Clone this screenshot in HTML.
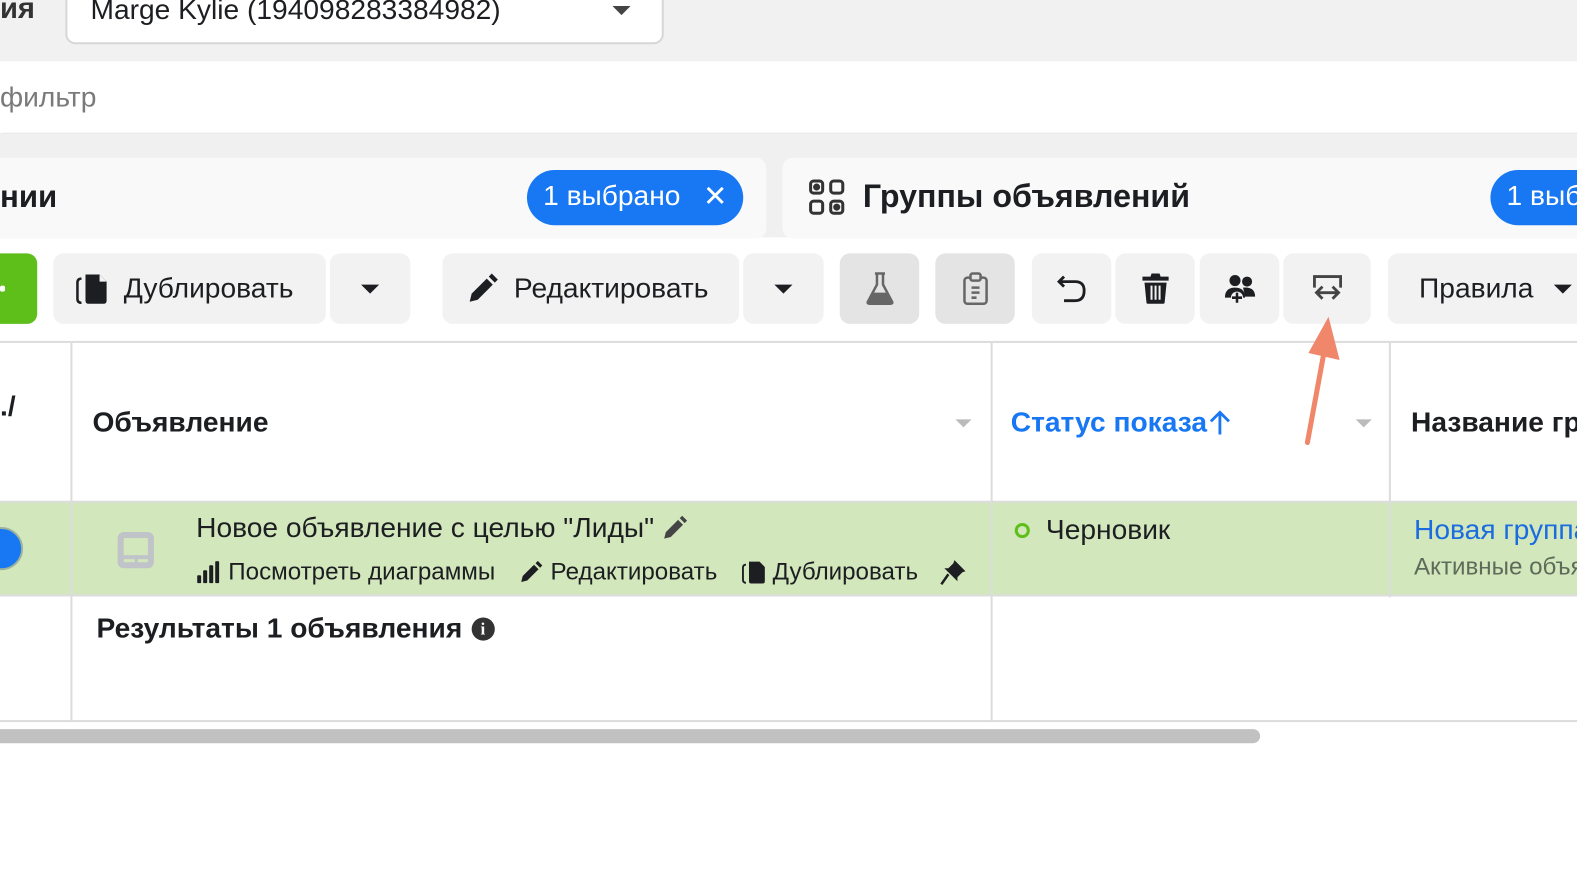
<!DOCTYPE html>
<html><head><meta charset="utf-8"><style>
*{margin:0;padding:0;box-sizing:border-box}
body{width:1577px;height:888px;overflow:hidden;background:#fff;position:relative;font-family:"Liberation Sans","DejaVu Sans",sans-serif;color:#1c1e21}
#w{position:absolute;left:0;top:0;width:1577px;height:888px;transform:scale(1.0057);transform-origin:0 0}
.a{position:absolute}
.btn{position:absolute;top:252px;height:70px;background:#f2f2f2;border-radius:10px;display:flex;align-items:center;justify-content:center;font-size:28px;color:#1c1e21}
.t{white-space:nowrap}
.vl{position:absolute;width:2px;background:#dcdcdc}
.caret{width:0;height:0;border-left:9px solid transparent;border-right:9px solid transparent;border-top:9px solid #1c1e21}
.row{display:flex;align-items:center;white-space:nowrap}
</style></head><body><div id="w">
<div class="a" style="left:0;top:0;width:1577px;height:61px;background:#f1f1f1"></div>
<div class="a t" style="left:0;top:-7px;font-size:29px;font-weight:bold;color:#333">ия</div>
<div class="a" style="left:65px;top:-10px;width:595px;height:54px;background:#fff;border:2px solid #d6d6d6;border-radius:10px"></div>
<div class="a t" style="left:90px;top:-6px;font-size:28px;color:#1c1e21">Marge Kylie (194098283384982)</div>
<div class="a caret" style="left:609px;top:6px;border-top-color:#444"></div>
<div class="a" style="left:0;top:61px;width:1577px;height:71px;background:#fff;box-shadow:0 2px 3px rgba(0,0,0,.12)"></div>
<div class="a t" style="left:0;top:81px;font-size:28px;color:#7a7a7a">фильтр</div>
<div class="a" style="left:0;top:133px;width:1577px;height:103px;background:#f0f0f0"></div>
<div class="a" style="left:-20px;top:157px;width:782px;height:80px;background:#f9f9f9;border-radius:10px"></div>
<div class="a t" style="left:0;top:178px;font-size:31px;font-weight:bold;color:#1c1e21">нии</div>
<div class="a" style="left:524px;top:169px;width:215px;height:55px;background:#1877f2;border-radius:28px"></div>
<div class="a t" style="left:540px;top:179px;font-size:28px;color:#fff">1 выбрано</div>
<div class="a t" style="left:699px;top:178px;font-size:29px;color:#fff">✕</div>
<div class="a" style="left:778px;top:157px;width:820px;height:80px;background:#f9f9f9;border-radius:10px"></div>
<svg class="a" style="left:804px;top:178px" width="36" height="36" viewBox="0 0 36 36" fill="none" stroke="#333" stroke-width="3"><rect x="2" y="2" width="12" height="12" rx="3"/><rect x="22" y="2" width="12" height="12" rx="3"/><rect x="2" y="22" width="12" height="12" rx="3"/><rect x="22" y="22" width="12" height="12" rx="3"/><circle cx="8" cy="8" r="2" fill="#333"/><circle cx="28" cy="28" r="2" fill="#333"/></svg>
<div class="a t" style="left:858px;top:177px;font-size:32px;font-weight:bold;color:#1c1e21">Группы объявлений</div>
<div class="a" style="left:1482px;top:169px;width:140px;height:55px;background:#1877f2;border-radius:28px"></div>
<div class="a t" style="left:1498px;top:179px;font-size:28px;color:#fff">1 выб</div>
<div class="a" style="left:-20px;top:252px;width:57px;height:70px;background:#5fbf1a;border-radius:10px"></div>
<div class="a" style="left:0;top:284px;width:5px;height:6px;background:#fff;border-radius:2px"></div>
<div class="btn" style="left:53px;width:271px;justify-content:flex-start;padding-left:22px">
<svg width="34" height="32" viewBox="0 0 34 32"><path d="M6 6 Q2 6 2 10 V26 Q2 30 6 30" fill="none" stroke="#1c1e21" stroke-width="2.5"/><path d="M10 2 H24 L31 9 V28 Q31 31 28 31 H13 Q10 31 10 28 Z" fill="#1c1e21"/><path d="M24 2 V9 H31" fill="#f2f2f2"/></svg>
<span style="margin-left:14px">Дублировать</span></div>
<div class="btn" style="left:328px;width:80px"><div class="caret"></div></div>
<div class="btn" style="left:440px;width:295px;justify-content:flex-start;padding-left:24px">
<svg width="32" height="32" viewBox="0 0 32 32"><path d="M3 29 L5 21 L20 6 L26 12 L11 27 Z" fill="#1c1e21"/><path d="M22 4 L25 1 L31 7 L28 10 Z" fill="#1c1e21"/></svg>
<span style="margin-left:15px">Редактировать</span></div>
<div class="btn" style="left:739px;width:80px"><div class="caret"></div></div>
<div class="btn" style="left:835px;width:79px;background:#e4e4e4">
<svg width="30" height="34" viewBox="0 0 30 34"><path d="M10 2 H20 M12 2 V13 L3 30 Q2 32 5 32 H25 Q28 32 27 30 L18 13 V2" fill="none" stroke="#666" stroke-width="2.5"/><path d="M7 21 H23 L27 30 Q28 32 25 32 H5 Q2 32 3 30 Z" fill="#666"/></svg></div>
<div class="btn" style="left:930px;width:79px;background:#e4e4e4">
<svg width="28" height="34" viewBox="0 0 28 34" fill="none" stroke="#666" stroke-width="2.5"><rect x="3" y="6" width="22" height="26" rx="3"/><rect x="9" y="2" width="10" height="7" rx="2" fill="#e4e4e4"/><path d="M10 16 H18 M10 21 H18 M10 26 H15"/></svg></div>
<div class="btn" style="left:1026px;width:79px">
<svg width="30" height="28" viewBox="0 0 30 28" fill="none" stroke="#1c1e21" stroke-width="2.8"><path d="M7 2 L2 7 L7 12"/><path d="M2 7 H18 Q27 7 27 16 Q27 26 18 26 H7"/></svg></div>
<div class="btn" style="left:1109px;width:79px">
<svg width="28" height="32" viewBox="0 0 28 32"><path d="M10 1 H18 L19 4 H27 V8 H1 V4 H9 Z" fill="#1c1e21"/><path d="M3 10 H25 L23 30 Q23 31 21 31 H7 Q5 31 5 30 Z" fill="#1c1e21"/><path d="M10 13 V27 M14 13 V27 M18 13 V27" stroke="#f2f2f2" stroke-width="2"/></svg></div>
<div class="btn" style="left:1193px;width:79px">
<svg width="34" height="30" viewBox="0 0 34 30"><circle cx="12" cy="7" r="5.5" fill="#1c1e21"/><circle cx="24" cy="8" r="5" fill="#1c1e21"/><path d="M2 24 Q2 14 12 14 Q22 14 22 24 Z" fill="#1c1e21"/><path d="M20 14 Q32 13 32 23 H22" fill="#1c1e21"/><circle cx="14" cy="24" r="6" fill="#f2f2f2"/><path d="M14 19 V29 M9 24 H19" stroke="#1c1e21" stroke-width="2.5"/></svg></div>
<div class="btn" style="left:1276px;width:87px">
<svg width="32" height="30" viewBox="0 0 32 30" fill="none" stroke="#444" stroke-width="2.8"><path d="M3 14 V3 H29 V14"/><path d="M11 13 L5 19 L11 25 M5 19 H27 M21 13 L27 19 L21 25"/></svg></div>
<div class="btn" style="left:1380px;width:230px;justify-content:flex-start;padding-left:31px"><span>Правила</span><div class="caret" style="margin-left:20px"></div></div>
<div class="a" style="left:0;top:339px;width:1577px;height:2px;background:#dcdcdc"></div>
<div class="a t" style="left:0;top:388px;font-size:28px;font-weight:bold">./</div>
<div class="a t" style="left:92px;top:404px;font-size:28px;font-weight:bold">Объявление</div>
<div class="a" style="left:950px;top:417px;border-left:8px solid transparent;border-right:8px solid transparent;border-top:8px solid #bbb"></div>
<div class="a row" style="left:1005px;top:404px;font-size:28px;font-weight:bold;color:#1877f2">Статус показа<svg width="22" height="26" viewBox="0 0 22 26" style="margin-left:2px" fill="none" stroke="#1877f2" stroke-width="2.8"><path d="M11 25 V3 M2 12 L11 3 L20 12"/></svg></div>
<div class="a" style="left:1348px;top:417px;border-left:8px solid transparent;border-right:8px solid transparent;border-top:8px solid #bbb"></div>
<div class="a t" style="left:1403px;top:404px;font-size:28px;font-weight:bold">Название гр</div>
<div class="a" style="left:0;top:498px;width:1577px;height:95px;background:#d3e7bc;border-top:2px solid #dcdcdc;border-bottom:2px solid #dcdcdc"></div>
<div class="a" style="left:-20px;top:524px;width:43px;height:43px;border-radius:50%;background:#1877f2;border:2px solid #9cb39c"></div>
<svg class="a" style="left:115px;top:527px" width="40" height="40" viewBox="0 0 40 40"><rect x="2" y="2" width="36" height="36" rx="6" fill="#c0c4c8"/><rect x="8" y="8" width="24" height="17" fill="#d3e7bc"/><rect x="8" y="29" width="11" height="3" fill="#d3e7bc"/><rect x="22" y="29" width="10" height="3" fill="#d3e7bc"/></svg>
<div class="a row" style="left:195px;top:509px;font-size:28px;color:#1c1e21">Новое объявление с целью "Лиды"<svg style="margin-left:8px" width="26" height="26" viewBox="0 0 32 32"><path d="M3 29 L5 21 L20 6 L26 12 L11 27 Z" fill="#444"/><path d="M22 4 L25 1 L31 7 L28 10 Z" fill="#444"/></svg></div>
<div class="a row" style="left:196px;top:555px;font-size:24px">
<svg width="22" height="22" viewBox="0 0 22 22" fill="#1c1e21"><rect x="0" y="14" width="4" height="8" rx="1"/><rect x="6" y="9" width="4" height="13" rx="1"/><rect x="12" y="4" width="4" height="18" rx="1"/><rect x="18" y="0" width="4" height="22" rx="1"/></svg>
<span style="margin-left:9px">Посмотреть диаграммы</span>
<svg style="margin-left:24px" width="24" height="24" viewBox="0 0 32 32"><path d="M3 29 L5 21 L20 6 L26 12 L11 27 Z" fill="#1c1e21"/><path d="M22 4 L25 1 L31 7 L28 10 Z" fill="#1c1e21"/></svg>
<span style="margin-left:7px">Редактировать</span>
<svg style="margin-left:24px" width="26" height="24" viewBox="0 0 34 32"><path d="M6 6 Q2 6 2 10 V26 Q2 30 6 30" fill="none" stroke="#1c1e21" stroke-width="2.5"/><path d="M10 2 H24 L31 9 V28 Q31 31 28 31 H13 Q10 31 10 28 Z" fill="#1c1e21"/></svg>
<span style="margin-left:5px">Дублировать</span>
<svg style="margin-left:22px" width="26" height="26" viewBox="0 0 26 26"><path d="M14 1 L25 12 L22 13 L17 18 L17 22 L4 9 L8 9 L13 4 Z" fill="#1c1e21"/><path d="M8 15 L1 25" stroke="#1c1e21" stroke-width="2.5"/></svg>
</div>
<div class="a" style="left:1009px;top:520px;width:15px;height:15px;border-radius:50%;border:3.5px solid #5fbf1a"></div>
<div class="a t" style="left:1040px;top:511px;font-size:28px">Черновик</div>
<div class="a t" style="left:1406px;top:511px;font-size:28px;color:#1a6ce0">Новая группа</div>
<div class="a t" style="left:1406px;top:550px;font-size:24px;color:#5f6b5a">Активные объя</div>
<div class="a row" style="left:96px;top:609px;font-size:28px;font-weight:bold">Результаты 1 объявления<div style="margin-left:9px;width:23px;height:23px;border-radius:50%;background:#333;color:#fff;font-size:17px;font-weight:bold;text-align:center;line-height:23px;font-family:'Liberation Serif',serif">i</div></div>
<div class="vl" style="left:70px;top:341px;height:377px"></div>
<div class="vl" style="left:985px;top:341px;height:377px"></div>
<div class="vl" style="left:1381px;top:341px;height:253px"></div>
<div class="a" style="left:0;top:716px;width:1577px;height:2px;background:#dcdcdc"></div>
<div class="a" style="left:-10px;top:725px;width:1263px;height:14px;background:#c1c1c1;border-radius:7px"></div>
<svg class="a" style="left:1290px;top:308px" width="50" height="140" viewBox="0 0 50 140"><path d="M10 132 L26 45" stroke="#f0866a" stroke-width="5" stroke-linecap="round"/><path d="M31 7 L42 50 L11 43 Z" fill="#f0866a"/></svg>
</div></body></html>
